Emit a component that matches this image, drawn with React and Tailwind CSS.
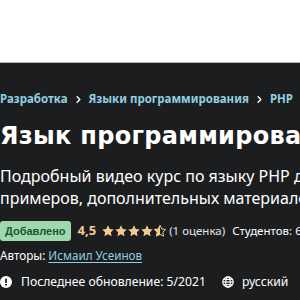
import React from "react";
import { ChevronRight } from "lucide-react";

function Star({ half }) {
  const d =
    "M6 0.3l1.75 3.6 3.95.55-2.85 2.75.7 3.95L6 9.3l-3.55 1.85.7-3.95L.3 4.45l3.95-.55z";
  return (
    <svg width="12" height="12" viewBox="0 0 12 12">
      <defs>
        <clipPath id="halfclip">
          <rect x="0" y="0" width="6" height="12" />
        </clipPath>
      </defs>
      {half ? (
        <>
          <path d={d} fill="none" stroke="#f3ca8c" strokeWidth="1" strokeLinejoin="round" />
          <path d={d} fill="#f3ca8c" clipPath="url(#halfclip)" />
        </>
      ) : (
        <path d={d} fill="#f3ca8c" />
      )}
    </svg>
  );
}

function App() {
  return (
    <div className="w-[300px] h-[300px] overflow-hidden bg-white font-['Noto_Sans',sans-serif]">
      {/* top white header */}
      <div className="h-[63px] bg-white border-b border-[#b4b4b4]"></div>

      <div className="bg-[#1c1d1f] h-[237px] pt-[28px] text-white whitespace-nowrap overflow-hidden">
        {/* breadcrumbs */}
        <div className="flex items-center text-[11.5px] leading-[16px] font-bold text-[#8fd0e3]">
          <span>Разработка</span>
          <ChevronRight size={11} strokeWidth={3} className="mx-[5px] text-white" />
          <span>Языки программирования</span>
          <ChevronRight size={11} strokeWidth={3} className="mx-[5px] text-white" />
          <span>PHP</span>
        </div>

        <h1 className="mt-[15px] text-[24px] leading-[28px] font-bold font-['DejaVu_Sans',sans-serif] tracking-[0.3px]">
          Язык программирования PHP
        </h1>

        <p className="mt-[15px] text-[16px] leading-[22px]">
          Подробный видео курс по языку PHP для начинающих
          <br />
          примеров, дополнительных материалов и заданий
        </p>

        <div className="mt-[12px] flex items-center h-[20px] text-[11.5px]">
          <span className="h-[20px] px-[5px] flex items-center rounded-[3px] bg-[#9fd8ab] text-[#1f5130] font-bold text-[11px] font-['Liberation_Sans',sans-serif]">
            Добавлено
          </span>
          <span className="ml-[7px] font-bold text-[13px] text-[#f3ca8c]">4,5</span>
          <span className="ml-[6px] flex gap-[1px]">
            <Star />
            <Star />
            <Star />
            <Star />
            <Star half />
          </span>
          <span className="ml-[3px] text-[#e6e6e6]">(1 оценка)</span>
          <span className="ml-[7px]">Студентов: 6</span>
        </div>

        <div className="mt-[5px] text-[11.7px] leading-[18px]">
          Авторы: <span className="text-[#8fd0e3] underline underline-offset-2">Исмаил Усеинов</span>
        </div>

        <div className="mt-[8px] flex items-center text-[12.2px] leading-[20px]">
          <svg width="12" height="12" viewBox="0 0 12 12">
            <circle cx="6" cy="6" r="6" fill="#ffffff" />
            <rect x="5.1" y="2.5" width="1.8" height="4.5" rx="0.6" fill="#1c1d1f" />
            <circle cx="6" cy="8.8" r="1" fill="#1c1d1f" />
          </svg>
          <span className="ml-[9px]">Последнее обновление: 5/2021</span>
          <svg className="ml-[16px]" width="12" height="12" viewBox="0 0 12 12" fill="none" stroke="#ffffff" strokeWidth="1.2">
            <circle cx="6" cy="6" r="5.2" />
            <ellipse cx="6" cy="6" rx="2.3" ry="5.2" />
            <line x1="0.8" y1="6" x2="11.2" y2="6" />
            <line x1="1.6" y1="3.3" x2="10.4" y2="3.3" />
            <line x1="1.6" y1="8.7" x2="10.4" y2="8.7" />
          </svg>
          <span className="ml-[8px]">русский</span>
        </div>
      </div>
    </div>
  );
}

export default App;
